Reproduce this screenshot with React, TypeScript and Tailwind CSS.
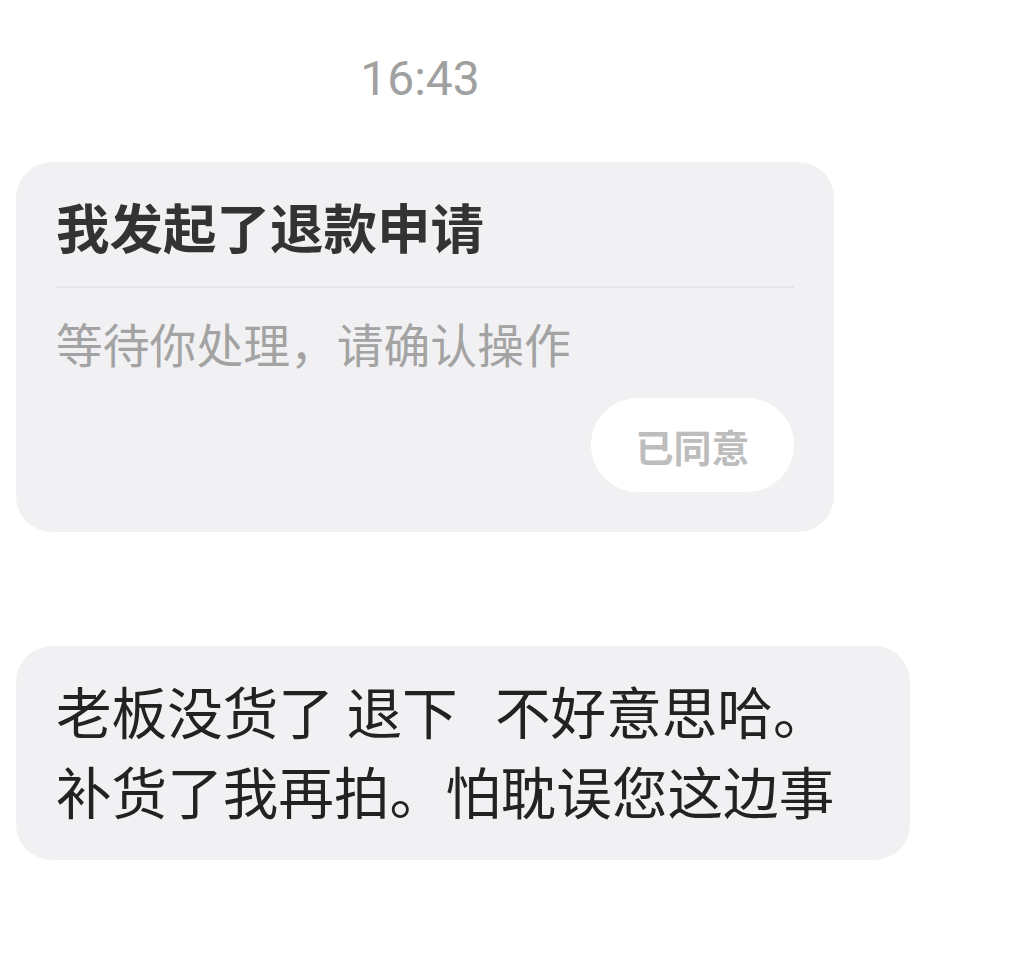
export default function App() {
  const cjk = { fontFamily: '"Noto Sans CJK SC", "Noto Sans", sans-serif' };
  return (
    <div className="min-h-[953px] w-[1032px] bg-white" style={cjk}>
      <div className="pt-[55px] w-[840px] text-center">
        <span
          className="text-[48px] leading-[48px] text-[#a0a0a0]"
          style={{ fontFamily: 'Roboto, "Noto Sans", sans-serif' }}
        >
          16:43
        </span>
      </div>
      <div className="ml-[16px] mt-[59px] w-[818px] rounded-[36px] bg-[#f1f1f3] px-[40px] pt-[37px] pb-[40px]">
        <div className="text-[53.5px] leading-[54px] font-bold text-[#333333]">
          我发起了退款申请
        </div>
        <div className="mt-[33px] h-[2px] bg-[#e6e6e8]" />
        <div className="mt-[31px] text-[46.8px] leading-[47px] text-[#a3a3a3]">
          等待你处理，请确认操作
        </div>
        <div className="mt-[32px] flex justify-end">
          <div className="flex h-[94px] w-[203px] items-center justify-center rounded-full bg-white text-[38px] font-bold text-[#bdbdbd]">
            已同意
          </div>
        </div>
      </div>
      <div className="ml-[16px] mt-[114px] w-[894px] rounded-[36px] bg-[#f1f1f3] pl-[40px] pr-[20px] pt-[24px] pb-[30px]">
        <div className="whitespace-pre text-[55.6px] leading-[80px] text-[#222222]">
          {"老板没货了 退下   不好意思哈。\n补货了我再拍。怕耽误您这边事"}
        </div>
      </div>
    </div>
  );
}
